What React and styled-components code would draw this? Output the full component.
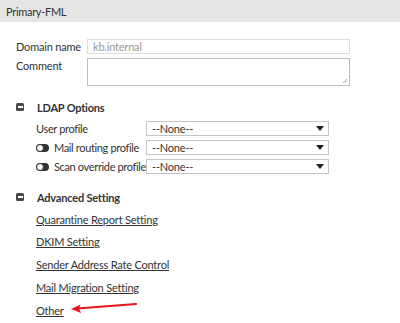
import React from 'react'
import styled, { createGlobalStyle } from 'styled-components'

const GlobalStyle = createGlobalStyle`
  body {
    margin: 0;
    background: #fff;
    font-family: Lato, "Open Sans", sans-serif;
    font-size: 11px;
    letter-spacing: -0.2px;
    color: #333;
  }
`

const Header = styled.div`
  height: 22px;
  background: #e5e5e5;
  display: flex;
  align-items: center;
  padding-left: 6px;
  font-size: 11px;
  letter-spacing: -0.3px;
  color: #333;
`

const Body = styled.div`
  padding: 17px 0 0 16px;
`

const FieldGrid = styled.div`
  display: grid;
  grid-template-columns: 71px 263px;
  row-gap: 4px;
`

const Label = styled.div`
  line-height: 15px;
  height: 15px;
  display: flex;
  align-items: center;
  gap: 5px;
  white-space: nowrap;
  letter-spacing: ${p => (p.$tight ? '-0.35px' : 'inherit')};
`

const TextInput = styled.div`
  box-sizing: border-box;
  height: 15px;
  border: 1px solid #dcdcdc;
  color: #999;
  padding-left: 5px;
  line-height: 13px;
`

const TextArea = styled.div`
  box-sizing: border-box;
  height: 28px;
  border: 1px solid #bdbdbd;
  position: relative;
`

const Grip = styled.svg`
  position: absolute;
  right: 1px;
  bottom: 1px;
`

const Section = styled.div`
  margin-top: ${p => p.$top}px;
`

const SectionHead = styled.div`
  display: flex;
  align-items: center;
  height: 16px;
  font-weight: bold;
  gap: 13px;
`

const Minus = styled.span`
  width: 8px;
  height: 8px;
  border-radius: 1.5px;
  background: #4a4a4a;
  display: flex;
  align-items: center;
  justify-content: center;
  &::after {
    content: '';
    width: 5px;
    height: 1.5px;
    background: #fff;
  }
`

const SelectGrid = styled.div`
  display: grid;
  grid-template-columns: 110px 183px;
  row-gap: 4px;
  margin: 6px 0 0 20px;
`

const Select = styled.div`
  box-sizing: border-box;
  height: 15px;
  border: 1px solid #c4c4c4;
  display: flex;
  align-items: center;
  justify-content: space-between;
  padding: 0 4px 0 5px;
`

const Caret = styled.span`
  width: 0;
  height: 0;
  border-left: 4px solid transparent;
  border-right: 4px solid transparent;
  border-top: 5px solid #222;
`

const Toggle = styled.span`
  box-sizing: border-box;
  width: 13px;
  height: 8px;
  border-radius: 4px;
  background: #333;
  position: relative;
  flex-shrink: 0;
  &::before {
    content: '';
    position: absolute;
    left: 0;
    top: 0;
    width: 8px;
    height: 8px;
    box-sizing: border-box;
    border-radius: 50%;
    border: 1px solid #333;
    background: #fff;
  }
`

const LinkList = styled.div`
  display: flex;
  flex-direction: column;
  align-items: flex-start;
  gap: 6.75px;
  margin: 6px 0 0 20px;
`

const LinkRow = styled.div`
  display: flex;
  align-items: center;
  height: 16px;
  position: relative;
`

const Link = styled.a`
  color: #333;
  text-decoration: underline;
  cursor: pointer;
`

const Arrow = styled.svg`
  position: absolute;
  left: 34px;
  top: -2px;
`

const selects = [
  { label: 'User profile', toggle: false },
  { label: 'Mail routing profile', toggle: true },
  { label: 'Scan override profile', toggle: true },
]

const links = [
  'Quarantine Report Setting',
  'DKIM Setting',
  'Sender Address Rate Control',
  'Mail Migration Setting',
]

export default function App() {
  return (
    <>
      <GlobalStyle />
      <Header>Primary-FML</Header>
      <Body>
        <FieldGrid>
          <Label>Domain name</Label>
          <TextInput>kb.internal</TextInput>
          <Label>Comment</Label>
          <TextArea>
            <Grip width="6" height="6" viewBox="0 0 6 6">
              <path d="M5 1 L1 5 M5 3 L3 5" stroke="#999" strokeWidth="0.8" />
            </Grip>
          </TextArea>
        </FieldGrid>

        <Section $top={13}>
          <SectionHead>
            <Minus />
            LDAP Options
          </SectionHead>
          <SelectGrid>
            {selects.map(s => (
              <React.Fragment key={s.label}>
                <Label $tight>
                  {s.toggle && <Toggle />}
                  {s.label}
                </Label>
                <Select>
                  --None--
                  <Caret />
                </Select>
              </React.Fragment>
            ))}
          </SelectGrid>
        </Section>

        <Section $top={15}>
          <SectionHead>
            <Minus />
            Advanced Setting
          </SectionHead>
          <LinkList>
            {links.map(l => (
              <LinkRow key={l}>
                <Link>{l}</Link>
              </LinkRow>
            ))}
            <LinkRow>
              <Link>Other</Link>
              <Arrow width="70" height="16" viewBox="0 0 70 16">
                <path d="M66 4 L7 8.5" stroke="#e8141c" strokeWidth="2.2" strokeLinecap="round" />
                <path d="M1 9 L10.5 4.5 L9 8.6 L11 13 Z" fill="#e8141c" />
              </Arrow>
            </LinkRow>
          </LinkList>
        </Section>
      </Body>
    </>
  )
}
